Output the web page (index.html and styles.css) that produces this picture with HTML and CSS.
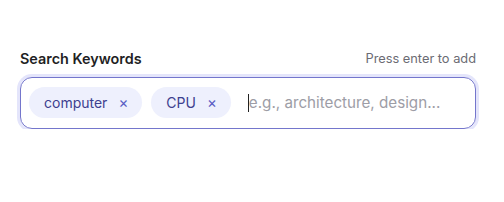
FILE: index.html
```html
<!DOCTYPE html>
<html lang="en">
<head>
<meta charset="utf-8">
<link rel="stylesheet" href="styles.css">
</head>
<body>
<div class="field">
  <div class="field-head">
    <label class="label" for="kw">Search Keywords</label>
    <span class="hint">Press enter to add</span>
  </div>
  <div class="box">
    <span class="tag">computer<span class="x">×</span></span>
    <span class="tag">CPU<span class="x">×</span></span>
    <span class="input-wrap">
      <span class="caret"></span>
      <input id="kw" class="input" type="text" placeholder="e.g., architecture, design...">
    </span>
  </div>
</div>
</body>
</html>
```
FILE: styles.css
```css
html, body {
  margin: 0;
  padding: 0;
  background: #fff;
  font-family: Inter, "Noto Sans", sans-serif;
}
.field {
  padding: 48px 28px 0 20px;
}
.field-head {
  display: flex;
  justify-content: space-between;
  align-items: center;
  height: 20px;
  margin-bottom: 9px;
}
.label {
  font-size: 14.4px;
  font-weight: 600;
  color: #1f1f24;
}
.hint {
  font-size: 12.8px;
  color: #6b6b73;
}
.box {
  display: flex;
  align-items: center;
  gap: 9px;
  padding: 9px 8px 10px 8px;
  border: 1px solid #7476cc;
  border-radius: 12px;
  box-shadow: 0 0 0 3px #e4e5fb;
  height: 31px;
}
.tag {
  display: inline-flex;
  align-items: center;
  height: 31px;
  padding: 0 14px 0 15px;
  border-radius: 16px;
  background: #eef0fd;
  color: #3d408f;
  font-size: 14px;
}
.x {
  margin-left: 11px;
  color: #5a5dc4;
  font-size: 15px;
}
.input-wrap {
  position: relative;
  flex: 1;
  display: flex;
  margin-left: 8px;
}
.caret {
  position: absolute;
  left: 0;
  top: 1px;
  width: 1px;
  height: 18px;
  background: #222;
}
.input {
  flex: 1;
  min-width: 0;
  border: none;
  outline: none;
  background: transparent;
  padding: 0 0 0 1px;
  font-family: inherit;
  font-size: 15.2px;
  color: #222;
}
.input::placeholder {
  color: #9d9da6;
}
```
